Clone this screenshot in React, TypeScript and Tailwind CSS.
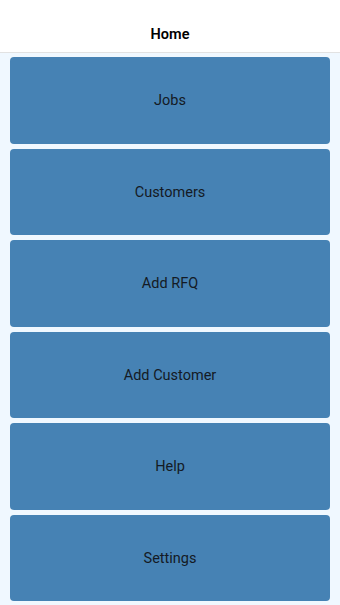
const items = ["Jobs", "Customers", "Add RFQ", "Add Customer", "Help", "Settings"];

export default function App() {
  return (
    <div
      className="flex h-[605px] w-[340px] flex-col bg-[#f0f8ff]"
      style={{ fontFamily: "Roboto, 'Noto Sans', sans-serif" }}
    >
      <header className="flex h-[53px] shrink-0 items-end justify-center border-b border-[#e2e2e2] bg-white pb-[6px]">
        <h1 className="text-[14.5px] font-semibold text-black">Home</h1>
      </header>
      <main className="flex h-[552px] flex-col gap-[5px] px-[10px] py-[4px]">
        {items.map((label) => (
          <button
            key={label}
            type="button"
            className="flex flex-1 items-center justify-center rounded-[4px] bg-[#4682b4] pt-[2px] text-[14.5px] text-[#141a24]"
          >
            {label}
          </button>
        ))}
      </main>
    </div>
  );
}
